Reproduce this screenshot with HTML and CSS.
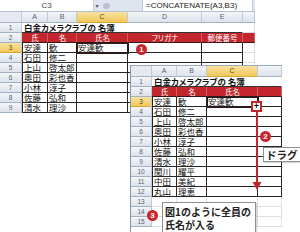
FILE: index.html
```html
<!DOCTYPE html>
<html lang="ja">
<head>
<meta charset="utf-8">
<title>CONCATENATE</title>
<link rel="stylesheet" href="styles.css">
</head>
<body>
<div class="canvas">
  <div class="sheet sheet1">
    <div class="fbar">
      <div class="namebox">C3</div>
      <div class="drop">▾</div>
      <div class="fxarea"><span class="grip"></span></div>
      <div class="formula">=CONCATENATE(A3,B3)</div>
    </div>
    <div class="grid g1">
      <div class="h corner"></div><div class="h">A</div><div class="h">B</div><div class="h hs">C</div><div class="h">D</div><div class="h">E</div><div class="h"></div>
      <div class="rh">1</div><div class="c title s5">白金カメラクラブの 名簿</div><div class="c"></div>
      <div class="rh">2</div><div class="c red">氏</div><div class="c red">名</div><div class="c red">氏名</div><div class="c red">フリガナ</div><div class="c red">郵便番号</div><div class="c red"></div>
      <div class="rh rhs">3</div><div class="c t tl">安達</div><div class="c t">歓</div><div class="c t sel">安達歓</div><div class="c t"></div><div class="c t"></div><div class="c"></div>
      <div class="rh">4</div><div class="c t tl">石田</div><div class="c t">修二</div><div class="c t"></div><div class="c t"></div><div class="c t"></div><div class="c"></div>
      <div class="rh">5</div><div class="c t tl">上山</div><div class="c t">啓太郎</div><div class="c t"></div><div class="c t"></div><div class="c t"></div><div class="c"></div>
      <div class="rh">6</div><div class="c t tl">奥田</div><div class="c t">彩也香</div><div class="c t"></div><div class="c t"></div><div class="c t"></div><div class="c"></div>
      <div class="rh">7</div><div class="c t tl">小林</div><div class="c t">淳子</div><div class="c t"></div><div class="c t"></div><div class="c t"></div><div class="c"></div>
      <div class="rh">8</div><div class="c t tl">佐藤</div><div class="c t">弘和</div><div class="c t"></div><div class="c t"></div><div class="c t"></div><div class="c"></div>
      <div class="rh">9</div><div class="c t tl">清水</div><div class="c t">理沙</div><div class="c t"></div><div class="c t"></div><div class="c t"></div><div class="c"></div>
    </div>
  </div>

  <div class="sheet sheet2">
    <div class="grid g2">
      <div class="h corner"></div><div class="h">A</div><div class="h">B</div><div class="h hs">C</div><div class="h"></div>
      <div class="rh">1</div><div class="c title s4">白金カメラクラブの 名簿</div>
      <div class="rh">2</div><div class="c red">氏</div><div class="c red">名</div><div class="c red">氏名</div><div class="c red"></div>
      <div class="rh rhs">3</div><div class="c t tl">安達</div><div class="c t">歓</div><div class="c t sel">安達歓</div><div class="c t"></div>
      <div class="rh">4</div><div class="c t tl">石田</div><div class="c t">修二</div><div class="c t"></div><div class="c t"></div>
      <div class="rh">5</div><div class="c t tl">上山</div><div class="c t">啓太郎</div><div class="c t"></div><div class="c t"></div>
      <div class="rh">6</div><div class="c t tl">奥田</div><div class="c t">彩也香</div><div class="c t"></div><div class="c t"></div>
      <div class="rh">7</div><div class="c t tl">小林</div><div class="c t">淳子</div><div class="c t"></div><div class="c t"></div>
      <div class="rh">8</div><div class="c t tl">佐藤</div><div class="c t">弘和</div><div class="c t"></div><div class="c t"></div>
      <div class="rh">9</div><div class="c t tl">清水</div><div class="c t">理沙</div><div class="c t"></div><div class="c t"></div>
      <div class="rh">10</div><div class="c t tl">関川</div><div class="c t">耀平</div><div class="c t"></div><div class="c t"></div>
      <div class="rh">11</div><div class="c t tl">中田</div><div class="c t">美紀</div><div class="c t"></div><div class="c t"></div>
      <div class="rh">12</div><div class="c t tl">丸山</div><div class="c t">理恵</div><div class="c t"></div><div class="c t"></div>
      <div class="rh">13</div><div class="c"></div><div class="c"></div><div class="c"></div><div class="c"></div>
      <div class="rh">14</div><div class="c"></div><div class="c"></div><div class="c"></div><div class="c"></div>
      <div class="rh">15</div><div class="c"></div><div class="c"></div><div class="c"></div><div class="c"></div>
    </div>
  </div>

  <span class="badge b1">1</span>
  <div class="handle">+</div>
  <svg class="arrow" width="12" height="80" viewBox="0 0 12 80">
    <rect x="5" y="0" width="2" height="72" fill="#c4242b"/>
    <polygon points="1.5,70 10.5,70 6,78" fill="#c4242b"/>
  </svg>
  <span class="badge b2">2</span>
  <div class="note drag">ドラグ</div>
  <span class="badge b3">3</span>
  <div class="note result">図1のように全員の<br>氏名が入る</div>
</div>
</body>
</html>
```

FILE: styles.css
```css
* { box-sizing: border-box; margin: 0; padding: 0; }
body {
  width: 300px;
  height: 232px;
  overflow: hidden;
  background: #fff;
  font-family: "Noto Sans CJK JP", sans-serif;
}
.canvas {
  position: relative;
  width: 300px;
  height: 232px;
  overflow: hidden;
  background: #fff;
}
.sheet {
  position: absolute;
  overflow: hidden;
  background: #fff;
}
.sheet1 {
  left: 0;
  top: 0;
  width: 255px;
  height: 113px;
  display: flex;
  flex-direction: column;
}
.fbar {
  height: 12px;
  display: flex;
  background: #dfe5ee;
  border-bottom: 1px solid #b4bfcf;
}
.namebox {
  width: 94px;
  background: #fff;
  font: 8px/11px "Liberation Sans", sans-serif;
  color: #444;
  text-align: center;
  border-right: 1px solid #c2cad6;
}
.drop {
  width: 6px;
  font: 6px/11px "DejaVu Sans", sans-serif;
  color: #555;
  text-align: center;
}
.fxarea {
  width: 42px;
  display: flex;
  align-items: center;
  padding-left: 3px;
}
.grip {
  width: 7px;
  height: 6px;
  border-radius: 50%;
  background: #b9c2ce;
}
.formula {
  width: 111px;
  background: #fff;
  font: 8px/11px "Liberation Sans", sans-serif;
  color: #222;
  padding-left: 3px;
  border-left: 1px solid #c2cad6;
  border-right: 1px solid #c2cad6;
}
.grid {
  display: grid;
}
.g1 {
  grid-template-columns: 22px 26px 29px 51px 74px 41px 12px;
  grid-template-rows: 11px repeat(9, 10px);
}
.sheet2 {
  left: 130px;
  top: 65px;
  width: 152px;
  height: 167px;
  border-top: 1px solid #9aa8bb;
  border-left: 1px solid #8595aa;
}
.g2 {
  grid-template-columns: 21px 25px 30px 51px 24px;
  grid-template-rows: 11px repeat(15, 10px);
}
.h, .rh {
  background: linear-gradient(#f3f5f8, #dde3eb);
  border-right: 1px solid #c0c9d6;
  border-bottom: 1px solid #a3b1c4;
  font: 7px/10px "Liberation Sans", sans-serif;
  color: #5a6270;
  text-align: center;
}
.rh { line-height: 9px; font-size: 6.5px; }
.h.corner { background: #e6eaf0; }
.h.hs, .rh.rhs {
  background: linear-gradient(#f9e3a0, #f1c75a);
  color: #5a4a20;
  border-bottom-color: #d6a93a;
}
.c {
  border-right: 1px solid #dbe0e8;
  border-bottom: 1px solid #dbe0e8;
  font-size: 8.5px;
  line-height: 9px;
  color: #111;
  padding-left: 1px;
  white-space: nowrap;
  font-feature-settings: "palt";
}
.c.title {
  font-weight: bold;
  padding-left: 2px;
  border-right-color: transparent;
  border-bottom-color: #333;
}
.s5 { grid-column: span 5; }
.s4 { grid-column: span 4; }
.c.red {
  background: #c4262d;
  color: #fff;
  text-align: center;
  font-size: 7.5px;
  border-right-color: rgba(255,255,255,0.25);
  border-bottom-color: #3a1416;
}
.c.t {
  border-right-color: #262626;
  border-bottom-color: #262626;
}
.c.tl { border-left: 1px solid #262626; }
.c.sel {
  outline: 2px solid #2a1a1a;
  outline-offset: -1px;
}
.badge {
  position: absolute;
  width: 11px;
  height: 11px;
  border-radius: 50%;
  background: #c8262c;
  color: #fff;
  font: bold 8px/11px "Liberation Sans", sans-serif;
  text-align: center;
}
.b1 { left: 136px; top: 44px; }
.b2 { left: 260px; top: 131px; }
.b3 { left: 147px; top: 210px; }
.handle {
  position: absolute;
  left: 251px;
  top: 101px;
  width: 11px;
  height: 11px;
  border: 2px solid #c4242b;
  background: #fff;
  font: bold 9px/7px "Liberation Sans", sans-serif;
  color: #111;
  text-align: center;
}
.arrow {
  position: absolute;
  left: 251px;
  top: 112px;
}
.note {
  position: absolute;
  background: #fff;
  border: 1px solid #8f8f8f;
  font-weight: bold;
  color: #222;
  box-shadow: 1px 1px 1px rgba(0,0,0,0.15);
}
.drag {
  left: 263px;
  top: 147px;
  width: 40px;
  height: 15px;
  font-size: 10.5px;
  line-height: 13px;
  padding-left: 2px;
}
.result {
  left: 162px;
  top: 202px;
  width: 94px;
  height: 34px;
  font-size: 10px;
  line-height: 13px;
  padding: 2px 0 0 2px;
}
```
